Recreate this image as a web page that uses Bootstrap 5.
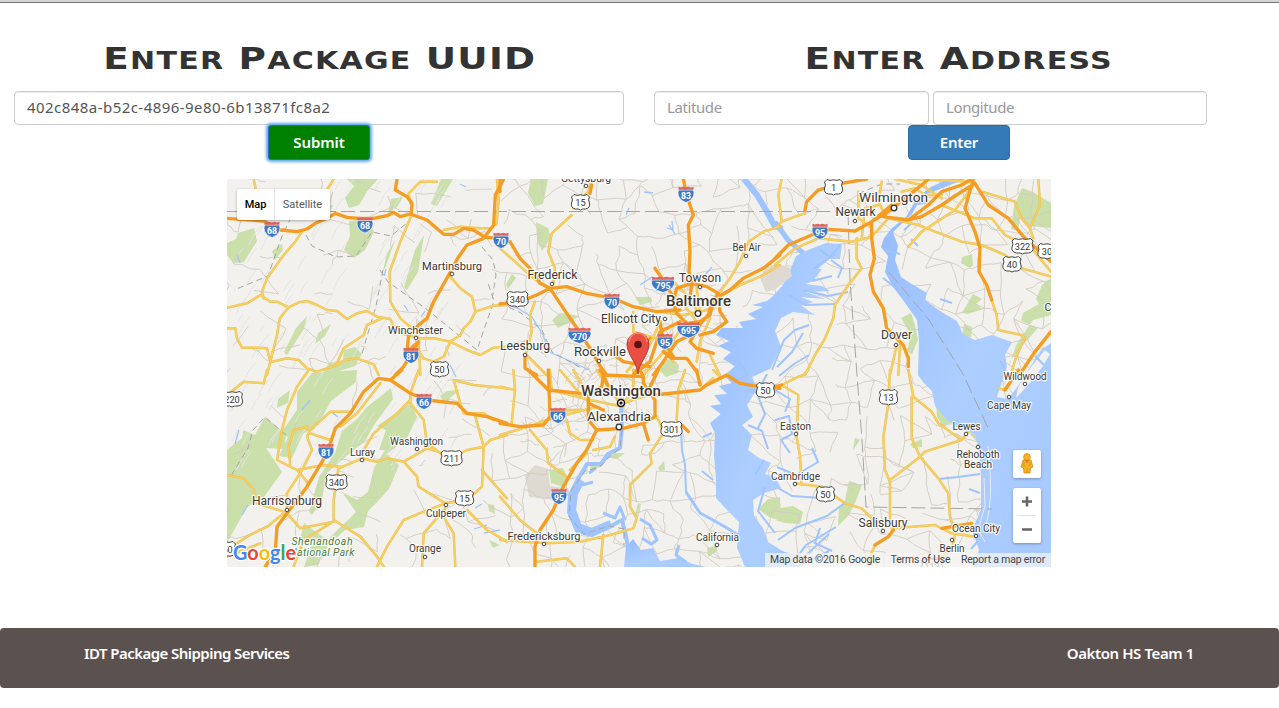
<!DOCTYPE html>
<html lang="en">
<head>
<meta charset="utf-8">
<meta name="viewport" content="width=device-width, initial-scale=1">
<title>IDT Package Shipping Services</title>
<link href="https://cdn.jsdelivr.net/npm/bootstrap@5.3.0/dist/css/bootstrap.min.css" rel="stylesheet">
<style>
body{font-family:"Noto Sans","Open Sans",sans-serif;color:#333;overflow:hidden;height:708px;font-size:16px}
.top-edge{height:3px;background:#d5d5d5;border-bottom:1px solid #777}
.pane-uuid{width:639px;padding:0 15px 0 14px}
.pane-addr{width:640px;padding:0 15px}
.title{font:700 30.5px/36px "DejaVu Sans",sans-serif;height:36px;margin:38px 0 14px;white-space:nowrap;letter-spacing:1px;transform:scaleX(1.226)}
.title span{font-size:24.5px;text-transform:uppercase}
.title.t-uuid{padding-left:2px}
.form-control{height:34px;padding:4px 12px 6px;border:1px solid #ccc;border-radius:4px;font-size:15px;line-height:22px;color:#555;box-shadow:inset 0 1px 1px rgba(0,0,0,.075)}
.form-control::placeholder{color:#999}
.uuid{letter-spacing:.45px}
.coord{width:275px;margin-right:4px;letter-spacing:-.4px}
.coord + .coord{width:274px;margin:0}
.act{width:102px;height:35px;padding:0;font-weight:600;font-size:15px;border-radius:4px;color:#fff}
.act-submit{background:green;border:1px solid #2a6cc0;box-shadow:0 0 3px 2px #62a8f5;border-radius:3px;letter-spacing:-.1px}
.act-enter{background:#337ab7;border:1px solid #2e6da4;letter-spacing:-.2px}
.map-wrap{width:824px;height:388px;margin:19px 0 0 227px}
.map-wrap svg.chart{display:block}
.map-type{left:10px;top:10px;height:31px;font:11px/31px Roboto,sans-serif;box-shadow:0 1px 3px rgba(0,0,0,.3);border-radius:2px}
.map-type div{color:#565656;text-align:center;width:55px}
.map-type div:first-child{color:#000;font-weight:500;width:38px;border-right:1px solid #e6e6e6}
.peg{right:10px;top:271px;width:28px;height:28px;border-radius:2px;box-shadow:0 1px 3px rgba(0,0,0,.3)}
.zoomer{right:10px;top:309px;width:28px;height:55px;border-radius:2px;box-shadow:0 1px 3px rgba(0,0,0,.3)}
.peg svg,.zoomer svg{display:block}
.credit{right:0;bottom:0;width:286px;height:14px;background:rgba(245,245,245,.72);font:10.4px/14px Roboto,sans-serif;letter-spacing:-.15px;color:#444;padding:0 6px 0 5px;white-space:nowrap}
.foot{margin-top:61px;height:60px;background:#5b514f;border-radius:4px;color:#fff;font-weight:600;font-size:15px;line-height:22px;padding:14px 85px 0 84px;letter-spacing:-.55px}
.foot span:last-child{letter-spacing:-.4px}
.city{font-family:Roboto,sans-serif;fill:#3b3733;paint-order:stroke;stroke:#fff;stroke-opacity:.85;stroke-width:2.4px;stroke-linejoin:round;text-anchor:middle}
.shield-no{font-family:Roboto,sans-serif;text-anchor:middle}
.rd path{fill:none;stroke-linejoin:round;stroke-linecap:round}
.y1 path{stroke:var(--line,#e8bf58);stroke-width:var(--wide,7.5)}
.y-core{--line:#f8d05c;--wide:4.8}
.o1 path{stroke:#f59c22;stroke-width:10}
.creek path{fill:none;stroke:#9fc4ff;stroke-linejoin:round}
</style>
</head>
<body class="bg-white">
<div class="top-edge"></div>
<div class="d-flex">
  <section class="pane-uuid d-flex flex-column align-items-center">
    <h1 class="title t-uuid">E<span>nter</span> P<span>ackage</span> UUID</h1>
    <input class="form-control uuid" type="text" value="402c848a-b52c-4896-9e80-6b13871fc8a2">
    <button class="btn act act-submit" type="button">Submit</button>
  </section>
  <section class="pane-addr d-flex flex-column align-items-center">
    <h1 class="title">E<span>nter</span> A<span>ddress</span></h1>
    <div class="d-flex align-self-start">
      <input class="form-control coord" type="text" placeholder="Latitude">
      <input class="form-control coord" type="text" placeholder="Longitude">
    </div>
    <button class="btn act act-enter" type="button">Enter</button>
  </section>
</div>

<main class="map-wrap position-relative overflow-hidden">
<svg class="chart" width="824" height="388" viewBox="227 179 824 388">
  <defs>
    <linearGradient id="sea" x1="0" y1="0" x2="1" y2="1"><stop offset="0" stop-color="#93bbff"/><stop offset=".5" stop-color="#adceff"/><stop offset="1" stop-color="#a6c9ff"/></linearGradient>
    <g id="ih2"><path d="M-7.500-4H7.500C9 1 7 6 0 8.500C-7 6-9 1-7.500-4Z" fill="#3e79c9" stroke="#fff" stroke-width=".7"/><path d="M-7.500-4.300V-7.200L-5-6.500L-2.500-7.300L0-6.500L2.500-7.300L5-6.500L7.500-7.200V-4.300Z" fill="#db6560"/></g>
    <g id="ih3"><path d="M-11-4H11C13 1 9 6 0 8.500C-9 6-13 1-11-4Z" fill="#3e79c9" stroke="#fff" stroke-width=".7"/><path d="M-11-4.300V-7.200L-7-6.500L-3.500-7.300L0-6.500L3.500-7.300L7-6.500L11-7.200V-4.300Z" fill="#db6560"/></g>
    <path id="us2" d="M-6.500-7.500Q-3.500-5.800 0-7.200Q3.500-5.800 6.500-7.500L9-5Q7-2 9 1Q10 6 5 7Q2 6.500 0 8Q-2 6.500-5 7Q-10 6-9 1Q-7-2-9-5Z" fill="#fff" stroke="#474747" stroke-width="1"/>
    <path id="us3" d="M-8-7.500Q-4-5.800 0-7.200Q4-5.800 8-7.500L10.500-5Q8.500-2 10.500 1Q11.500 6 6 7Q2 6.500 0 8Q-2 6.500-6 7Q-11.500 6-10.500 1Q-8.500-2-10.500-5Z" fill="#fff" stroke="#474747" stroke-width="1"/>
  </defs>
  <rect x="227" y="179" width="824" height="388" fill="#f2f1ed"/>

  <!-- parks and forests -->
  <g fill="#cadfaa">
    <path d="M347 179H378L368 190L359 205L349 208L345 198L354 186ZM349 221L368 219L374 232L365 250L354 258L344 250L350 236ZM318 208L333 205L329 214L318 217ZM238 233L254 228L257 241L244 262L233 263L227 255V243L236 239ZM272 251L282 244L283 250L275 260ZM395 240L386 266L383 271L387 253ZM424 235L418 272L407 290L404 287L415 250ZM307 316L304 329L287 355L284 352L296 328ZM331 324L325 336L315 344L318 333ZM441 179H453L437 206L431 204ZM344 350L355 347L362 354L355 366L320 377L329 363L343 360ZM391 199L403 197L397 207L388 213Z"/>
    <path d="M297 392L312 373L357 370L356 382L331 401L318 425L303 434L292 458L279 456L288 437L281 433L297 410ZM265 417L286 435L284 449L266 448L282 472L264 497L247 507L227 543V450L242 438L243 430L255 435ZM391 388L393 399L374 425L365 441L343 459L326 474L322 500L312 515L309 512L319 477L335 453L342 431L357 419L367 407ZM411 403L417 417L407 438L387 454L399 465L389 489L378 501L368 511L364 527L345 530L328 545L318 565L304 567L312 544L299 543L304 523L327 540L349 519L356 512L342 492L357 500L368 492L374 468L385 450L379 450L386 430L377 426ZM278 399L290 390L288 403L277 408ZM440 396L447 391L460 390L451 397L445 405ZM488 504L494 505L495 514L489 511ZM489 540L500 545L493 548Z"/>
    <path d="M531 179H548L543 204L535 206L528 193ZM536 222L548 228L551 238L542 251L537 240ZM552 320L560 313L568 314L579 316L572 321L558 328ZM635 297L651 297L652 302L640 305ZM512 274L516 278L508 289L506 284ZM659 370L664 361L672 358L679 365L678 373L666 377ZM549 470L563 468L568 478L563 487L551 483ZM605 454L625 453L617 459L604 457ZM591 464L599 462L600 467L590 470ZM658 468L664 461L665 470L660 471ZM707 548L718 545L716 552L708 557ZM638 503L641 504L638 518L635 515Z"/>
    <path d="M1014 206L1022 188L1033 192L1051 203V228L1028 226L1020 218L1018 231L1011 229ZM962 257L972 254L973 265L970 268L961 263ZM962 313L973 294L982 299L976 304L982 309L968 314ZM901 318L911 313L915 325L918 340L912 354L907 351L911 335ZM1009 367L1016 345L1033 320L1051 315V278L1042 285L1036 299L1039 304L1023 313L1021 321L1038 328L1022 346L1010 361ZM964 324L972 327L971 337L962 336ZM936 404L953 422L943 427L937 417ZM849 481L862 485L855 503L849 515L838 526L839 508L845 500ZM775 509L793 506L803 512L800 524L785 523L775 520ZM855 438L860 440L853 450ZM970 434L977 431L977 442ZM910 444L922 439L922 447L913 448ZM758 509L768 499L780 497L781 521L769 517Z"/>
  </g>
  <g fill="#dedad2"><path d="M525 476L535 465L548 469L550 486L568 488L570 495L555 500L529 497Z"/></g>

  <!-- ridges and local roads, filled by script -->
  <g fill="none"><path id="ridges" stroke="#e4e4e4" stroke-width="1"/><path id="localRoads" stroke="#d3ccc2" stroke-width=".9"/></g>

  <!-- open water -->
  <g fill="url(#sea)">
    <path d="M842 244L826 243L808 250L796 256L791 268L783 285L773 296L767 301L752 305L763 307L748 314L756 319L739 322L743 328L722 328L716 335L729 341L718 346L731 352L723 359L735 366L724 376L732 383L719 386L727 394L714 395L721 404L710 406L721 414L710 423L715 433L714 455L716 480L716 498L727 510L739 522L737 548L745 567H799L786 553L768 542L763 528L754 516L753 500L764 493L781 488L775 477L765 474L771 463L759 458L748 450L752 435L742 425L753 417L747 405L757 389L752 377L770 369L781 347L775 331L781 318L793 312L815 315L801 306L813 302L801 297L825 299L806 292L830 291L822 286L806 284L813 281L822 269L818 269L829 259L840 259Z"/>
    <path d="M948 179L931 187L917 198L906 217L892 228L884 238L881 247L888 256L885 272L893 287L903 300L917 320L919 341L918 375L923 382L932 391L935 406L947 420L962 430L975 434L979 450L981 478L981 510L972 530L979 550L973 567H1051V343L1041 350L1025 375L1018 386L1008 399L997 397L1007 366L1005 355L1012 342L992 335L975 340L963 334L957 321L940 311L925 300L927 293L910 283L901 277L895 260L898 246L893 232L912 214L917 205L931 203L914 198L935 191L965 179Z"/>
    <path d="M624 567L626 547L633 539L641 550L653 548L660 561L678 558L693 564L706 567Z"/>
  </g>
  <path d="M1025 375L1035 362L1045 350L1050 354L1043 366L1029 384L1016 398L1018 388Z" fill="#f2f1ed"/>
  <path d="M760 278L766 267L778 264L790 268L792 276L774 290L766 292Z" fill="#dedad2"/>
  <path d="M984 478L985 506L978 530L985 542M988 446Q995 506 983 533" fill="none" stroke="#e8ecf2"/>
  <g class="creek">
    <path stroke-width="6" d="M744 179L757 195L766 210L774 225L782 229"/>
    <path stroke-width="5" d="M775 222L788 240L803 253"/>
    <path stroke-width="4" d="M621 402L622 427L620 448L608 454L601 464L587 464L578 479L570 495L569 512L577 531L592 535L609 527L622 520L626 536L628 548"/>
    <path stroke-width="8" d="M581 480L574 493L572 510L578 527L592 532L611 524"/>
    <path stroke-width="3" d="M625 520L620 507L615 518L603 513M596 468L589 473M582 485L593 482M686 492L700 513L713 520L727 528L738 535M640 519L650 525L657 540L651 544L642 538M679 545L676 555L686 562"/>
    <path stroke-width="2" d="M681 430L682 450L685 465L686 492"/>
    <path stroke-width="2" d="M820 250L830 257L841 244M831 260L842 268L838 278M812 281L832 276M803 290L828 296L848 292M789 295L805 305L835 304M720 332L744 337M728 360L741 370M748 389L757 393L767 374M758 396L765 414L757 430M772 370L784 340L795 330L809 325M777 367L792 352L803 333M779 376L794 364L809 355M775 390L790 399L785 412M775 420L789 416L792 434L781 440L790 453M777 467L796 475L818 462L812 448M764 460L755 475M748 425L762 431L768 449M778 488L792 496L821 498M778 540L795 528L827 516L846 502M781 552L803 558L829 534M790 566L806 545L836 527M798 566L829 551M765 487L758 511L775 533M820 528L815 543L832 551M938 479L958 477L980 474M969 489L980 493M883 278L896 288M904 230L911 224M911 239L918 246M940 299L952 303M885 250L900 254M813 269L835 254M1000 361L1006 371M1035 356L1044 365M971 549L978 541M703 437L712 433M713 480L702 471M737 359L748 375L731 382"/>
    <path stroke-width="1.300" d="M500 302L519 309L532 317L543 335L549 352L570 361L589 370M640 285L652 277L657 291M667 228L673 230L672 221M669 225L675 234M705 275L712 267M626 215L629 208M644 192L653 193M386 269L384 276M310 400L302 410M330 411L338 417M425 311L421 317M404 305L408 311M237 255L240 263M460 184L466 187M474 529L487 525M484 533L500 530M475 508L482 504M450 365L456 377M239 430L235 444M242 515L248 505"/>
  </g>

  <!-- boundaries -->
  <g fill="none" stroke="#a5a5a5" stroke-width="1" stroke-dasharray="14 5">
    <path d="M227 211.500H848M848 211L850 280L857 375L862 440L866 507L992 509M889 272L929 320L963 374L989 430"/>
    <path stroke-dasharray="6 4" d="M380 270L388 282L425 308L477 350L488 318L494 301L488 283M383 270L376 306L361 357M306 235L312 246L336 257L356 256L372 232L391 236L407 223M300 199L282 236L268 276L234 290M286 435L265 417L253 430L248 448L231 476M855 215L862 192L882 184L900 184M622 430L620 448L608 458L600 467L585 471L571 491L569 517L584 534L609 526L624 529L624 545M500 303L521 313L542 330L552 352L583 369M482 247L493 260L496 275L492 300"/>
  </g>

  <!-- yellow roads, one group per map tile -->
  <g class="rd"><g id="yellow" class="y1">
    <g transform="translate(227 175) scale(.33333)"><path d="M555 117L520 200L488 290L490 380L520 430L555 460L570 485M225 170L205 200L170 240L120 310L105 350L110 370M0 398L60 385L100 360L130 380L150 380L185 397L215 382L240 378L270 390L300 405L330 408L360 432L390 415L420 408L450 425L490 432L500 455L520 475L560 485M185 397L158 430L150 480L130 560L120 600M0 460L25 460L30 490L45 518L90 518L120 520L130 562L180 550L215 555L240 580L270 590L330 570L355 555L390 550L440 568L455 600M330 565L350 520L410 480L420 450L465 430M575 490L620 490L670 500L700 480L710 460L730 440L745 410L800 392L840 390M670 305L700 340L735 365L745 410M670 500L720 525L760 540L800 518L840 515M550 85L545 55L580 20L630 20M650 165L700 155L760 160L795 160M560 510L590 550L620 560L650 545L670 500M80 12L90 60M320 12L300 45M810 12L815 80L808 150M575 500L580 600"/></g>
    <g transform="translate(500 175) scale(.33333)"><path d="M215 120L155 175L145 230L165 280L160 325M840 155L790 170L745 200L720 260L690 310L660 350M840 270L780 305L720 330L660 365M105 380L90 420L95 470L80 530M80 540L140 600M275 12L265 50L220 100M0 220L45 260L100 310L140 335M480 410L550 420L600 410L640 400M520 360L560 400L590 440M590 340L600 410M520 320L570 370L590 405M480 440L450 510L380 590M560 440L500 520L430 600M630 430L600 500L590 560M400 470L470 490L520 560M630 540L660 600M400 410L400 470L440 490"/></g>
    <g transform="translate(775 175) scale(.33333)"><path d="M20 12L10 60L20 140L0 160M20 140L60 125L90 115M0 270L60 220L130 190L230 200L290 185L340 130M245 190L245 250L260 280L220 330L180 390L175 430L150 490L120 540L90 600M340 130L430 150L480 170L560 200L620 210L690 240L740 280L828 305M650 375L665 420L670 465L740 480L750 490L725 540L710 590M400 215L440 170L540 105L600 25M500 90L600 130L650 130L690 180L770 220L828 290M620 50L720 80L740 130L765 160M790 12L795 90L765 160L775 190M365 510L345 600M375 510L370 600M320 20L310 80L330 120M250 50L250 130L290 160M360 12L440 30L500 70M590 20L480 15L400 12M260 190L270 100L310 90M380 50L420 40L450 60L500 60"/></g>
    <g transform="translate(227 370) scale(.33333)"><path d="M575 0L550 70L550 100L590 150L600 220L640 250M550 90L510 130L440 190L410 240M335 295L405 265L450 275L480 265L530 275L600 235L680 260L720 240L770 230L790 210L840 195M530 275L570 320L575 350L655 400L720 390L765 350L770 230L745 140M335 290L320 390L320 450L400 500L450 560L470 590M180 430L220 475L320 455M245 0L210 50L180 120L165 180L150 270L210 300L245 340M365 125L310 125L250 180L240 200L255 240L225 300L180 370L180 420M0 315L50 325L80 360L90 400L170 425M0 540L60 500L120 470L170 430M655 400L590 425L530 450L480 530L450 590M655 415L590 490L585 590M650 440L680 490L685 590M720 420L780 480L840 515M680 30L740 45L840 55M680 30L700 100M0 75L50 35L110 40L120 0M765 300L800 340L840 385M210 300L290 285L340 290M240 170L200 180L185 230L190 290M240 175L250 190L310 210M460 40L390 130L340 170M0 560L100 520M700 100L710 130L770 130L800 150M310 460L230 510L200 590"/></g>
    <g transform="translate(500 370) scale(.33333)"><path d="M555 0L535 60L530 150M490 190L450 250L455 280L390 345L390 410L410 445L400 475L330 495L240 515L140 520L0 510M0 50L45 60L35 160M90 180L140 240L145 280L200 320M0 195L100 165L140 150L270 115M310 495L300 590M0 380L60 450L110 490M110 575L200 565L225 590M470 140L480 160L490 190M40 0L45 60M150 0L155 60L270 90L370 110M180 0L230 60L270 100M290 0L330 60L360 100M400 0L400 60L370 100M370 100L460 70M220 0L265 75M170 120L260 120L290 110M280 240L330 230L345 200M210 300L260 250M640 0L660 20M640 25L610 50M200 150L210 190L240 210L280 210"/></g>
    <g transform="translate(775 370) scale(.33333)"><path d="M20 45L70 75L65 200L75 260L80 345M20 45L70 20L85 15L100 0M345 0L340 100L325 200L330 300L345 335L345 450M345 330L435 260L450 245L560 210M400 0L415 80L470 125L490 160L560 210L580 185M410 80L410 205L435 260L490 325L520 370L525 440L540 490M60 340L140 350L210 400L260 415L300 455M350 475L480 465L530 490L600 500M540 495L530 540L480 570M300 525L280 570M670 55L690 60"/></g>
  </g><use href="#yellow" class="y-core"/></g>

  <!-- highways -->
  <g class="rd"><g class="o1">
    <g transform="translate(227 175) scale(.33333)"><path d="M0 130L110 138L160 165L210 170L240 162L265 145L300 130L325 115L360 127L395 130L440 130L480 122L500 112L520 125L550 117L600 135L650 178L680 178L710 160L740 165L775 187L840 190M510 12L505 45L540 65L555 85L553 117M830 12L805 60L800 150L770 190L720 210L695 245L665 300L640 345L620 380L600 430L575 450L545 480L540 530L575 500L530 575L505 600"/></g>
    <g transform="translate(500 175) scale(.33333)"><path d="M0 190L30 200L60 250L100 290L120 325L150 340L200 335L260 355L340 370L400 395L470 410L540 405M0 387L60 380L110 360L150 340L190 400L235 465L270 520L305 580L320 600M550 12L560 60L580 120L565 150L570 230L567 290L575 325L570 370M575 325L530 340L520 380L530 415L560 445L600 440L630 420L640 380L655 355L620 335L575 325M840 240L790 280L730 310L690 345L655 365L630 400L625 420L570 480L530 500L490 560L460 600M465 280L500 330L520 370M540 440L480 470L450 560L400 600M600 450L570 500L590 520L640 535M490 530L515 550L560 550L590 590M655 365L660 410L680 440L640 470L600 480M450 575L370 560L330 530M75 545L75 580L110 600M410 585L400 600M450 490L440 500M480 440L490 500L520 545M0 12L0 50M275 30L270 55"/></g>
    <g transform="translate(775 175) scale(.33333)"><path d="M0 250L40 210L110 180L160 163L240 168L290 140L340 110L390 70L440 30L460 12M290 140L290 190L298 250L285 300L295 350L325 400L335 460L385 510L400 550L400 575M325 125L400 135L440 125L500 90L560 50L600 25M400 135L460 90L500 50L560 30L590 12M595 12L570 100L600 170L615 220L612 290L635 330L650 375M600 25L640 90L700 130L750 190L828 260M828 470L780 530L740 590M90 105L95 80L130 45L200 25L275 12M290 140L350 90L330 120"/></g>
    <g transform="translate(227 370) scale(.33333)"><path d="M525 0L490 30L455 25L410 65L370 130L325 175L300 250L240 350L180 430L150 470L145 540L115 590M490 30L550 70L600 90L690 100L720 130L780 140L840 160"/></g>
    <g transform="translate(500 370) scale(.33333)"><path d="M85 0L145 60L240 70M0 160L60 170L130 165L150 140L145 0M265 75L265 150L290 180L370 175L430 160L465 140L465 90L430 40L430 20L310 15L305 50L265 75M290 180L260 240L230 280L190 350L160 420L120 480L105 530L105 590M465 75L600 60L620 45L680 15L720 40L780 50L840 55M430 160L445 210M545 165L565 185M590 0L600 45M310 15L300 0M430 20L420 0M450 50L475 0M265 100L310 120M310 15L330 60"/></g>
    <g transform="translate(775 370) scale(.33333)"><path d="M0 50L20 45M355 480L340 500L300 525M690 60L730 0M500 475L590 460"/></g>
  </g></g>

  <!-- pin -->
  <path d="M638 374C637 362 627 355 627 344A11 11 0 0 1 649 344C649 355 639 362 638 374Z" fill="#ea4f43" stroke="#9e3029" stroke-width=".8"/>
  <path d="M629 342A9 9 0 0 1 647 342" fill="none" stroke="#f4867b" stroke-width="1.500"/><circle cx="638" cy="344.500" r="3.800" fill="#5a1310"/>
  <g id="shields"></g><g id="cities"></g>
  <text x="233" y="560" font-family="Lato,Roboto,sans-serif" font-size="21.500" font-weight="700" textLength="63" lengthAdjust="spacingAndGlyphs" stroke="#fff" stroke-width="2.500" paint-order="stroke" stroke-linejoin="round"><tspan fill="#4285f4">G</tspan><tspan fill="#ea4335">o</tspan><tspan fill="#fbbc05">o</tspan><tspan fill="#4285f4">g</tspan><tspan fill="#34a853">l</tspan><tspan fill="#ea4335">e</tspan></text>
</svg>
  <div class="map-type position-absolute d-flex bg-white"><div>Map</div><div>Satellite</div></div>
  <div class="peg position-absolute bg-white"><svg width="28" height="28"><g fill="#f9b423" stroke="#c68119" stroke-width=".7"><path d="M10 10H18L20 17L17.500 18L17 23H11L10.500 18L8 17Z"/><circle cx="14" cy="7" r="3.400"/></g><path d="M12 10.500H16L14 13Z" fill="#e8632b"/><path d="M14 18V23M11 12V17M17 12V17" stroke="#c68119" stroke-width=".7"/></svg></div>
  <div class="zoomer position-absolute bg-white"><svg width="28" height="55"><path d="M9 13.500H19M14 8.500V18.500M9 41.500H19" stroke="#666" stroke-width="2.600"/><path d="M4 27.500H23" stroke="#e4e4e4"/></svg></div>
  <div class="credit position-absolute d-flex justify-content-between"><span>Map data ©2016 Google</span><span>Terms of Use</span><span>Report a map error</span></div>
</main>

<footer class="foot d-flex justify-content-between"><span>IDT Package Shipping Services</span><span>Oakton HS Team 1</span></footer>

<script src="https://cdn.jsdelivr.net/npm/bootstrap@5.3.0/dist/js/bootstrap.bundle.min.js"></script>
<script>
const NS='http://www.w3.org/2000/svg';
function add(parent,tag,attrs,text){
  const e=document.createElementNS(NS,tag);
  for(const k in attrs)e.setAttribute(k,attrs[k]);
  if(text)e.textContent=text;
  parent.appendChild(e);return e;
}
// name, text centre x, baseline y, width, font size, dot x, dot y
const cities=[
['Gettysburg',586,182,50,10.5,586,186],['Martinsburg',452,270,60,11,452,274],['Frederick',552.5,279,50,12,552,284],
['Winchester',415.5,333.500,55,11,416,338],['Leesburg',525,350,50,12,525,355],['Rockville',600,356,52,12,599,361],
['Ellicott City',631,323,60,12,665,319],['Towson',700,282,42,12,700,287],['Baltimore',698.5,306,65,14,698,313.5],
['Bel Air',746.500,251,28,10.5,746,256],['Newark',855.500,216,40,12,855,221],['Wilmington',893.500,202,69,13.5,894,208],
['Dover',896.500,339,31,12,896,345],['Washington',621,396,80,14,621,403],['Alexandria',619,421,64,13.5,619,427],
['Luray',362.500,456,25,11,362,460],['Washington',416.5,444.500,53,10.5,417,449],['Harrisonburg',287,505,70,12.5,287,510],
['Culpeper',446,516.500,40,10.5,446,505],['Orange',425,552,32,10.5,425,557],['Fredericksburg',544,540,73,11.5,544,544],
['California',717.500,540.500,43,10.5,717,545],['Easton',795.5,429.500,31,10.5,796,434],['Cambridge',795.5,479.500,49,10.5,795,484],
['Salisbury',883,527,49,12.5,883,531],['Lewes',966.500,430,28,10.5,966,434],['Rehoboth',978,458,43,10.5,978,447],
['Beach',978,468,28,10.5],['Wildwood',1025,380,43,10.5,1025,384],['Cape May',1009,408.500,44,10.5,1009,397],
['Ocean City',976,531.500,48,10.5,976,536],['Berlin',952,551.5,25,10.5,952,540],['C',1048,311,7,11]];
const cg=document.getElementById('cities');
for(const [n,x,y,w,s,dx,dy] of cities){
  if(dx){
    const big=s>13;
    add(cg,'circle',{cx:dx,cy:dy,r:big?2.8:1.8,fill:'#fff',stroke:'#333','stroke-width':big?1.3:.9});
  }
  add(cg,'text',{x,y,class:'city','font-size':s,textLength:w,lengthAdjust:'spacingAndGlyphs','font-weight':s===14?500:400},n);
}
add(cg,'circle',{cx:621,cy:403,r:3.5,fill:'#fff',stroke:'#111','stroke-width':1.5});
add(cg,'circle',{cx:621,cy:403,r:1.6,fill:'#111'});
for(const [n,x,y,w] of [['Shenandoah',322,545,61],['National Park',322,555.500,65]])
  add(cg,'text',{x,y,class:'city','font-size':10.5,textLength:w,'font-style':'italic',style:'fill:#477a3c'},n);
// kind, number, centre x, centre y
const shields=[['i','68',272,229],['i','68',365,224.500],['i','70',501,240],['i','83',686,194],['i','95',820,231],['i','795',663,284],
['i','70',612,301],['i','695',688.5,329.500],['i','95',665,341],['i','270',579.5,335],['i','81',411,355],['i','66',424,401],['i','66',558,415],
['i','81',326,451],['i','95',559,496],['u','15',580.5,202],['u','1',833.5,187],['u','322',1022.5,246],['u','40',1012,264],['u','30',1047,251],
['u','340',517.5,299],['u','50',439.500,369],['u','220',232,399],['u','211',451.500,458],['u','340',336.500,482],['u','15',464.5,498],
['u','301',671.500,429],['u','50',765.500,390],['u','13',888.5,397],['u','50',825.5,494],['u','250',225,549],['u','113',932,566]];
const sg=document.getElementById('shields');
for(const [k,n,x,y] of shields){
  const wide=n.length>2;
  add(sg,'use',{href:'#'+(k==='i'?'ih':'us')+(wide?3:2),x,y});
  add(sg,'text',{x,y:y+(k==='i'?4.500:3.5),class:'shield-no','font-size':k==='i'?8.8:9.2,'font-weight':k==='i'?700:400,fill:k==='i'?'#fff':'#333'},n);
}
// local road mesh: seeded, wobbling links between neighbouring junctions
let seed=41;const rnd=()=>(seed=(seed*16807)%2147483647)/2147483647;
const step=19,nodes=[];
for(let r=0;r<23;r++){nodes.push([]);for(let c=0;c<46;c++)nodes[r].push([222+c*step+(rnd()-.5)*16,174+r*step+(rnd()-.5)*16]);}
let d='';
const link=(a,b)=>{const m=t=>[a[0]+(b[0]-a[0])*t+(rnd()-.5)*3,a[1]+(b[1]-a[1])*t+(rnd()-.5)*3].map(v=>v.toFixed(1));
  d+=`M${a[0].toFixed(1)} ${a[1].toFixed(1)}L${m(.33)}L${m(.66)}L${b[0].toFixed(1)} ${b[1].toFixed(1)}`;};
for(let r=0;r<22;r++)for(let c=0;c<45;c++){
  const p=nodes[r][c],dense=p[0]>500?.6:.18;
  if(rnd()<dense)link(p,nodes[r][c+1]);
  if(rnd()<dense)link(p,nodes[r+1][c]);
  if(rnd()<dense*.35)link(p,nodes[r+1][c+1]);
}
// tighter street pattern around the two large cities
for(const [cx,cy,n] of [[695,312,34],[610,392,60],[560,425,22]])
  for(let i=0;i<n;i++){const x=cx+(rnd()-.5)*74,y=cy+(rnd()-.5)*56;link([x,y],[x+(rnd()-.5)*30,y+(rnd()-.5)*30]);}
document.getElementById('localRoads').setAttribute('d',d);
let rg='';
for(let i=0;i<150;i++){const x=230+rnd()*230,y=185+rnd()*300,l=6+rnd()*14;rg+=`M${x.toFixed(1)} ${y.toFixed(1)}l${(l*.3).toFixed(1)} ${(-l*.6).toFixed(1)}l${(l*.4).toFixed(1)} ${(-l*.5).toFixed(1)}`;}
document.getElementById('ridges').setAttribute('d',rg);
</script>
</body>
</html>
